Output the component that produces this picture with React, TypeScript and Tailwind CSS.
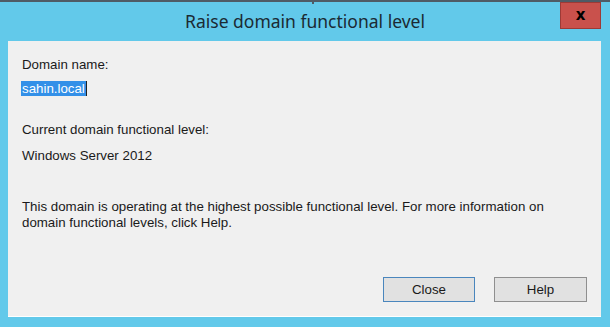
export default function App() {
  const body = "font-['Liberation_Sans',Arial,sans-serif] text-[13.3px] leading-[15px] text-[#1a1a1a]";

  return (
    <div className="relative flex h-[327px] w-[610px] flex-col overflow-hidden bg-[#62c9ea]">
      {/* top edge of the window behind */}
      <div className="h-[2px] w-full bg-[#4f5b66]" />
      <div className="absolute left-[312px] top-0 h-[4px] w-[2px] bg-[#4f5b66]" />

      {/* title bar */}
      <div className="relative flex h-[39px] items-center justify-center">
        <span className="-mt-[1px] font-['Noto_Sans',sans-serif] text-[17.5px] text-[#1b2a33]">
          Raise domain functional level
        </span>
        <button className="absolute right-[9px] top-0 flex h-[27px] w-[41px] items-center justify-center border border-[#9d3a36] bg-[#c9514c]">
          <span className="font-['DejaVu_Sans',sans-serif] text-[15px] font-bold leading-none text-black">x</span>
        </button>
      </div>

      {/* client area */}
      <div className="mb-[10px] ml-[8px] mr-[9px] flex flex-1 flex-col border-b border-white bg-[#f0f0f0] pl-[14px] pr-[14px]">
        <p className={`${body} mt-[16px]`}>Domain name:</p>
        <div className="mt-[9px] flex">
          <span className="-ml-[1px] h-[15px] border-r border-[#222] bg-[#3390e8] pl-[1px] pr-[1px] font-['Liberation_Sans',Arial,sans-serif] text-[13.3px] leading-[15px] text-white">
            sahin.local
          </span>
        </div>
        <p className={`${body} mt-[26px]`}>Current domain functional level:</p>
        <p className={`${body} mt-[11px]`}>Windows Server 2012</p>
        <p className={`${body} mt-[36px] leading-[16px]`}>
          This domain is operating at the highest possible functional level. For more information on
          <br />
          domain functional levels, click Help.
        </p>

        <div className="mt-[46px] flex justify-end gap-[19px]">
          <button className={`${body} h-[25px] w-[92px] border border-[#4a86bd] bg-[#e1e1e1]`}>Close</button>
          <button className={`${body} h-[25px] w-[93px] border border-[#8f8f8f] bg-[#e1e1e1]`}>Help</button>
        </div>
      </div>
    </div>
  );
}
